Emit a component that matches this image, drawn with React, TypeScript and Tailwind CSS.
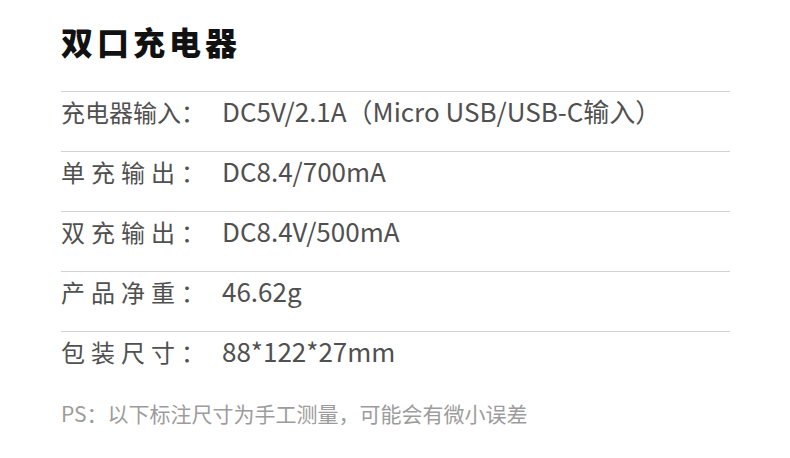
import React from "react";

const rows: { label: string; value: string; spaced: boolean }[] = [
  { label: "充电器输入：", value: "DC5V/2.1A（Micro USB/USB-C输入）", spaced: false },
  { label: "单充输出：", value: "DC8.4/700mA", spaced: true },
  { label: "双充输出：", value: "DC8.4V/500mA", spaced: true },
  { label: "产品净重：", value: "46.62g", spaced: true },
  { label: "包装尺寸：", value: "88*122*27mm", spaced: true },
];

export default function App() {
  return (
    <div
      className="w-[790px] h-[458px] bg-white pl-[61px] pt-[18px] overflow-hidden"
      style={{ fontFamily: '"Noto Sans CJK SC", "Noto Sans", sans-serif' }}
    >
      <h1 className="text-[32px] leading-[46px] font-black tracking-[4px] text-[#111]">双口充电器</h1>
      <div className="mt-[27px] w-[669px]">
        {rows.map((r) => (
          <div key={r.label} className="h-[60px] border-t border-[#d2d2d2] pt-[1px] flex items-baseline text-[#505050]">
            <div className={"w-[161px] shrink-0 whitespace-nowrap text-[24px] leading-[36px] " + (r.spaced ? "tracking-[6px]" : "")}>{r.label}</div>
            <div className="whitespace-nowrap text-[26px] leading-[36px]">{r.value}</div>
          </div>
        ))}
      </div>
      <div className="mt-[7px] text-[21px] leading-[30px] text-[#9c9c9c] whitespace-nowrap">
        PS：以下标注尺寸为手工测量，可能会有微小误差
      </div>
    </div>
  );
}
